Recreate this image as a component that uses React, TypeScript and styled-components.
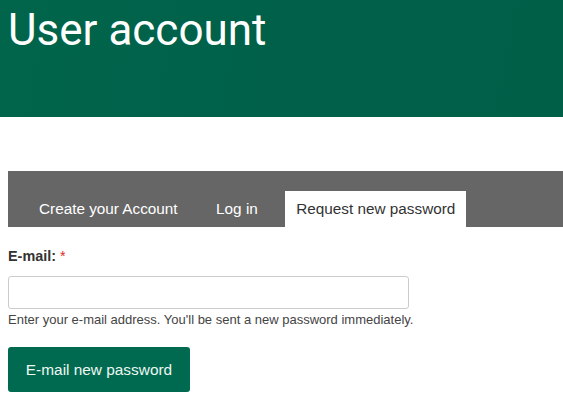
import React from "react";
import styled, { createGlobalStyle } from "styled-components";

const Global = createGlobalStyle`
  html, body { margin: 0; padding: 0; background: #fff; }
  body { font-family: "Liberation Sans", Arial, sans-serif; overflow: hidden; }
`;

const Page = styled.div`
  width: 563px;
  height: 416px;
  overflow: hidden;
`;

const Hero = styled.header`
  height: 117px;
  background: linear-gradient(100deg, #00654b 0%, #006049 55%, #005f47 100%);
  padding: 0 8px;
  box-sizing: border-box;
`;

const Title = styled.h1`
  margin: 0;
  padding-top: 4px;
  font-family: Roboto, "Liberation Sans", sans-serif;
  font-weight: 400;
  font-size: 44px;
  line-height: 52px;
  color: #fff;
`;

const Main = styled.main`
  padding: 54px 0 0 8px;
`;

const TabBar = styled.nav`
  display: flex;
  align-items: flex-end;
  gap: 16.5px;
  height: 56px;
  background: #666666;
  padding-left: 20px;
  box-sizing: border-box;
`;

const Tab = styled.a<{ $active?: boolean }>`
  display: flex;
  align-items: center;
  height: 36px;
  padding: 0 11px;
  font-size: 15.3px;
  color: ${(p) => (p.$active ? "#333" : "#fff")};
  background: ${(p) => (p.$active ? "#fff" : "transparent")};
  text-decoration: none;
  white-space: nowrap;
`;

const Form = styled.form`
  padding-top: 21px;
  display: flex;
  flex-direction: column;
`;

const Label = styled.label`
  font-size: 14.4px;
  font-weight: 700;
  color: #333;
  line-height: 16px;
`;

const Required = styled.span`
  color: #e1261c;
  font-weight: 400;
`;

const Input = styled.input`
  margin-top: 12px;
  width: 401px;
  height: 33px;
  box-sizing: border-box;
  border: 1px solid #cccccc;
  border-radius: 3px;
  font-size: 14px;
  padding: 0 8px;
`;

const Help = styled.div`
  font-size: 13px;
  color: #444;
  line-height: 15px;
  margin-top: 3px;
`;

const Button = styled.button`
  margin-top: 20px;
  align-self: flex-start;
  width: 182px;
  height: 45px;
  border: none;
  border-radius: 3px;
  background: #006a50;
  color: #eef7f2;
  font-family: "Liberation Sans", Arial, sans-serif;
  font-size: 15.4px;
  padding: 0;
`;

export default function App() {
  return (
    <Page>
      <Global />
      <Hero>
        <Title>User account</Title>
      </Hero>
      <Main>
        <TabBar>
          <Tab href="#">Create your Account</Tab>
          <Tab href="#">Log in</Tab>
          <Tab href="#" $active>Request new password</Tab>
        </TabBar>
        <Form onSubmit={(e) => e.preventDefault()}>
          <Label htmlFor="mail">
            E-mail: <Required>*</Required>
          </Label>
          <Input id="mail" type="text" />
          <Help>Enter your e-mail address. You'll be sent a new password immediately.</Help>
          <Button type="submit">E-mail new password</Button>
        </Form>
      </Main>
    </Page>
  );
}
